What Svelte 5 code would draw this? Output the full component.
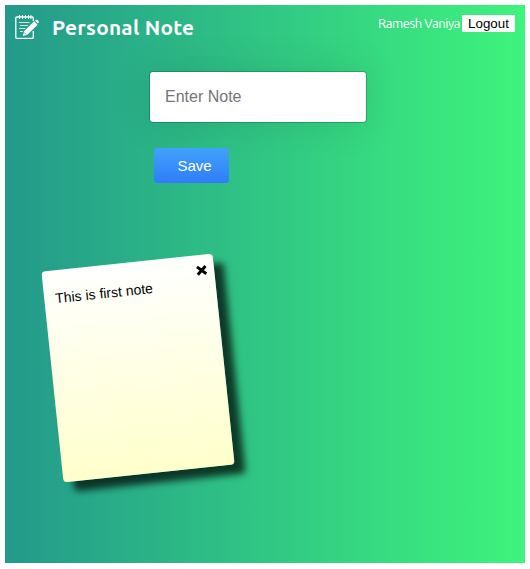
<script>
  let note = $state('');
  let notes = $state([{ id: 1, text: 'This is first note' }]);

  function save() {
    if (!note.trim()) return;
    notes.push({ id: Date.now(), text: note });
    note = '';
  }

  function remove(id) {
    notes = notes.filter((n) => n.id !== id);
  }
</script>

<div class="page">
  <header>
    <svg class="logo" width="26" height="26" viewBox="0 0 26 26" fill="none" stroke="#fff" stroke-width="1.3">
      <path d="M19.3 7V4.2Q19.3 3 18.1 3H3Q1.8 3 1.8 4.2V23.2Q1.8 24.4 3 24.4H18.1Q19.3 24.4 19.3 23.2V17" />
      <path d="M5.5 1V5M8.5 1V5M11.5 1V5M14.5 1V5M16.9 1V5" stroke-width="1" />
      <path d="M5 8.5H15.5M6 11.5H14M5 14.5H11.5M6 17.5H9" stroke-width="1" opacity=".8" />
      <path d="M10.2 17L20.2 7.3L23.6 10.7L13.4 20.8L8.8 22Z" fill="#fff" stroke="none" />
      <path d="M21 6.7L22.1 5.8Q22.8 5.4 23.4 6L24.7 7.3Q25.2 7.9 24.6 8.6L23.9 9.6Z" fill="#fff" stroke="none" />
      <path d="M10.4 18.6L12.2 20.4" stroke="#27a088" stroke-width=".8" />
    </svg>
    <h1>Personal Note</h1>
    <span class="user">Ramesh Vaniya</span>
    <button class="logout">Logout</button>
  </header>

  <div class="entry">
    <input placeholder="Enter Note" bind:value={note} />
    <button class="save" onclick={save}>Save</button>
  </div>

  <main>
    {#each notes as n (n.id)}
      <article>
        <p>{n.text}</p>
        <button class="close" aria-label="Delete note" onclick={() => remove(n.id)}>
          <svg width="11" height="11" viewBox="0 0 11 11" stroke="#000" stroke-width="3">
            <path d="M1.2 1.6L9.8 9.4M9.8 1.6L1.2 9.4" />
          </svg>
        </button>
      </article>
    {/each}
  </main>
</div>

<style>
  :global(body) {
    background: #fff;
  }

  .page {
    box-sizing: border-box;
    height: 558px;
    margin: 5px 5px 6px;
    overflow: hidden;
    background: linear-gradient(to right, #23998b, #3ef47c);
    font-family: 'Liberation Sans', Arial, sans-serif;
  }

  header {
    display: flex;
    align-items: flex-start;
    height: 66px;
    padding: 0 10px 0 9px;
    box-sizing: border-box;
    color: #fff;
    font-family: Ubuntu, 'Noto Sans', sans-serif;
  }

  .logo {
    flex: none;
    margin-top: 9px;
  }

  h1 {
    margin: 9px auto 0 12px;
    font-size: 20.8px;
    line-height: 28px;
    font-weight: 700;
    letter-spacing: 0.25px;
    white-space: nowrap;
  }

  .user {
    margin: 9px 2px 0 0;
    font-size: 13px;
    line-height: 19px;
    letter-spacing: -0.42px;
    white-space: nowrap;
  }

  button {
    border: 0;
    font-family: 'Liberation Sans', Arial, sans-serif;
  }

  .logout {
    width: 53px;
    height: 17px;
    margin-top: 10px;
    padding: 0;
    background: #fff;
    color: #000;
    font-size: 13.333px;
    line-height: 17px;
  }

  .entry {
    display: flex;
    flex-direction: column;
    align-items: flex-start;
    gap: 25px;
    padding-left: 144px;
  }

  input {
    box-sizing: border-box;
    width: 218px;
    height: 52px;
    padding: 0 15px;
    border: 1px solid rgba(0, 0, 0, 0.2);
    border-radius: 4px;
    background: #fff;
    background-clip: padding-box;
    box-shadow: 0 0 40px rgba(0, 0, 0, 0.1);
    font: 16px 'Liberation Sans', Arial, sans-serif;
    outline: 0;
  }

  input::placeholder {
    color: #757575;
    opacity: 1;
  }

  .save {
    width: 75px;
    height: 35px;
    margin-left: 5px;
    padding: 0 0 0 6px;
    border-radius: 3px;
    background: linear-gradient(#40a2f9, #2f7df8);
    color: #fff;
    font-size: 15px;
  }

  main {
    display: flex;
    padding: 79px 0 0 47px;
  }

  article {
    box-sizing: border-box;
    display: flex;
    justify-content: space-between;
    align-items: flex-start;
    width: 172px;
    height: 212px;
    padding: 10px;
    border-radius: 4px;
    background: linear-gradient(#fff, #ffc);
    box-shadow: 10px 10px 7px rgba(0, 0, 0, 0.7);
    transform: rotate(-6deg);
  }

  article p {
    margin: 9px 0 0 1px;
    font-size: 14px;
    line-height: 18px;
  }

  .close {
    display: flex;
    padding: 0;
    margin: 0 -3px 0 0;
    background: none;
  }
</style>
